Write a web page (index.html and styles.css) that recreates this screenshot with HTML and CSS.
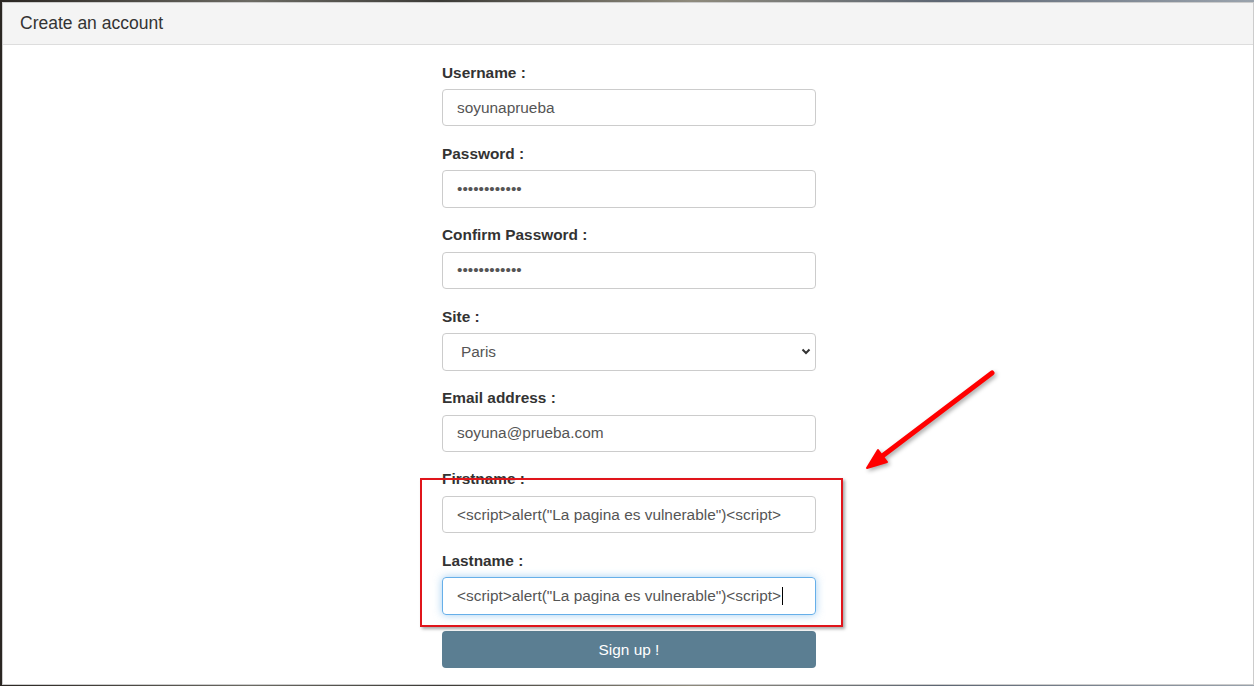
FILE: index.html
```html
<!DOCTYPE html>
<html lang="en">
<head>
    <meta charset="UTF-8">
    <meta name="viewport" content="width=device-width, initial-scale=1.0">
    <link rel="stylesheet" href="styles.css">
    <title>Create an account</title>
</head>
<body>
    <div class="modal">
        <header class="modalHead">
            <h4>Create an account</h4>
        </header>
        <main class="modalBody">
            <form class="signup" action="#" method="post">
                <div class="grupo">
                    <label class="infs">Username :</label>
                    <div class="campo">soyunaprueba</div>
                </div>
                <div class="grupo">
                    <label class="infs">Password :</label>
                    <div class="campo puntos">••••••••••••</div>
                </div>
                <div class="grupo">
                    <label class="infs">Confirm Password :</label>
                    <div class="campo puntos">••••••••••••</div>
                </div>
                <div class="grupo">
                    <label class="infs">Site :</label>
                    <div class="campo selecao">
                        <span>Paris</span>
                        <svg width="10" height="7" viewBox="0 0 10 7"><path d="M1.5 1.5 L5 5 L8.5 1.5" fill="none" stroke="#333" stroke-width="2"/></svg>
                    </div>
                </div>
                <div class="grupo">
                    <label class="infs">Email address :</label>
                    <div class="campo">soyuna@prueba.com</div>
                </div>
                <div class="grupo">
                    <label class="infs">Firstname :</label>
                    <div class="campo">&lt;script&gt;alert("La pagina es vulnerable")&lt;script&gt;</div>
                </div>
                <div class="grupo">
                    <label class="infs">Lastname :</label>
                    <div class="campo foco">&lt;script&gt;alert("La pagina es vulnerable")&lt;script&gt;<span class="cursor"></span></div>
                </div>
                <button type="submit" class="bttCadastrar">Sign up !</button>
            </form>
        </main>
    </div>

    <!-- anotacoes por cima do print -->
    <div class="destaque"></div>
    <svg class="seta" width="140" height="110" viewBox="0 0 140 110">
        <line x1="132" y1="8" x2="21" y2="92" stroke="#f00" stroke-width="5" stroke-linecap="round"/>
        <polygon points="7,103 27,97 18,85" fill="#f00" stroke="#f00" stroke-width="2" stroke-linejoin="round"/>
    </svg>
</body>
</html>
```

FILE: styles.css
```css
body {
    margin: 0;
    padding: 2px 0 0 2px;
    height: 686px;
    box-sizing: border-box;
    overflow: hidden;
    font-family: 'Liberation Sans', Arial, sans-serif;
    background: linear-gradient(90deg, #2a2622 0%, #6b6a63 20%, #3b3a36 35%, #8e8a7c 55%, #5d6673 75%, #9aa3ad 100%);
}

.modal {
    width: 1252px;
    height: 683px;
    background: #fff;
    border: 1px solid rgba(0, 0, 0, 0.2);
    box-sizing: border-box;
    display: flex;
    flex-direction: column;
}

.modalHead {
    height: 41px;
    background: #f4f4f4;
    border-bottom: 1px solid #ddd;
    display: flex;
    align-items: center;
    padding-left: 17px;
    flex-shrink: 0;
}

.modalHead h4 {
    margin: 0;
    font-size: 17.5px;
    font-weight: normal;
    color: #333;
}

.modalBody {
    display: flex;
    justify-content: center;
    padding-top: 16.5px;
    padding-left: 2px;
}

.signup {
    width: 374px;
    display: flex;
    flex-direction: column;
}

.grupo {
    margin-bottom: 16.5px;
}

.infs {
    display: block;
    font-size: 15.4px;
    line-height: 22px;
    font-weight: bold;
    color: #333;
    margin-bottom: 5.5px;
}

.campo {
    height: 37.4px;
    box-sizing: border-box;
    border: 1px solid #ccc;
    border-radius: 4px;
    padding: 0 14px;
    display: flex;
    align-items: center;
    font-size: 15.4px;
    color: #555;
    white-space: nowrap;
}

.selecao {
    justify-content: space-between;
    padding-left: 18px;
    padding-right: 4px;
}

.foco {
    border-color: #66afe9;
    box-shadow: 0 0 8px rgba(102, 175, 233, 0.6);
}

.cursor {
    display: inline-block;
    width: 1px;
    height: 18px;
    background: #000;
    margin-left: 1px;
}

.bttCadastrar {
    height: 37px;
    border: none;
    border-radius: 4px;
    background: #5b7e92;
    color: #fff;
    font-family: 'Liberation Sans', Arial, sans-serif;
    font-size: 15.4px;
    cursor: pointer;
}

.destaque {
    position: absolute;
    left: 420px;
    top: 478px;
    width: 423px;
    height: 149px;
    box-sizing: border-box;
    border: 2px solid #e0151b;
    box-shadow: 2px 2px 3px rgba(0, 0, 0, 0.35);
}

.seta {
    position: absolute;
    left: 860px;
    top: 365px;
    filter: drop-shadow(2px 2px 2px rgba(0, 0, 0, 0.35));
}
```
